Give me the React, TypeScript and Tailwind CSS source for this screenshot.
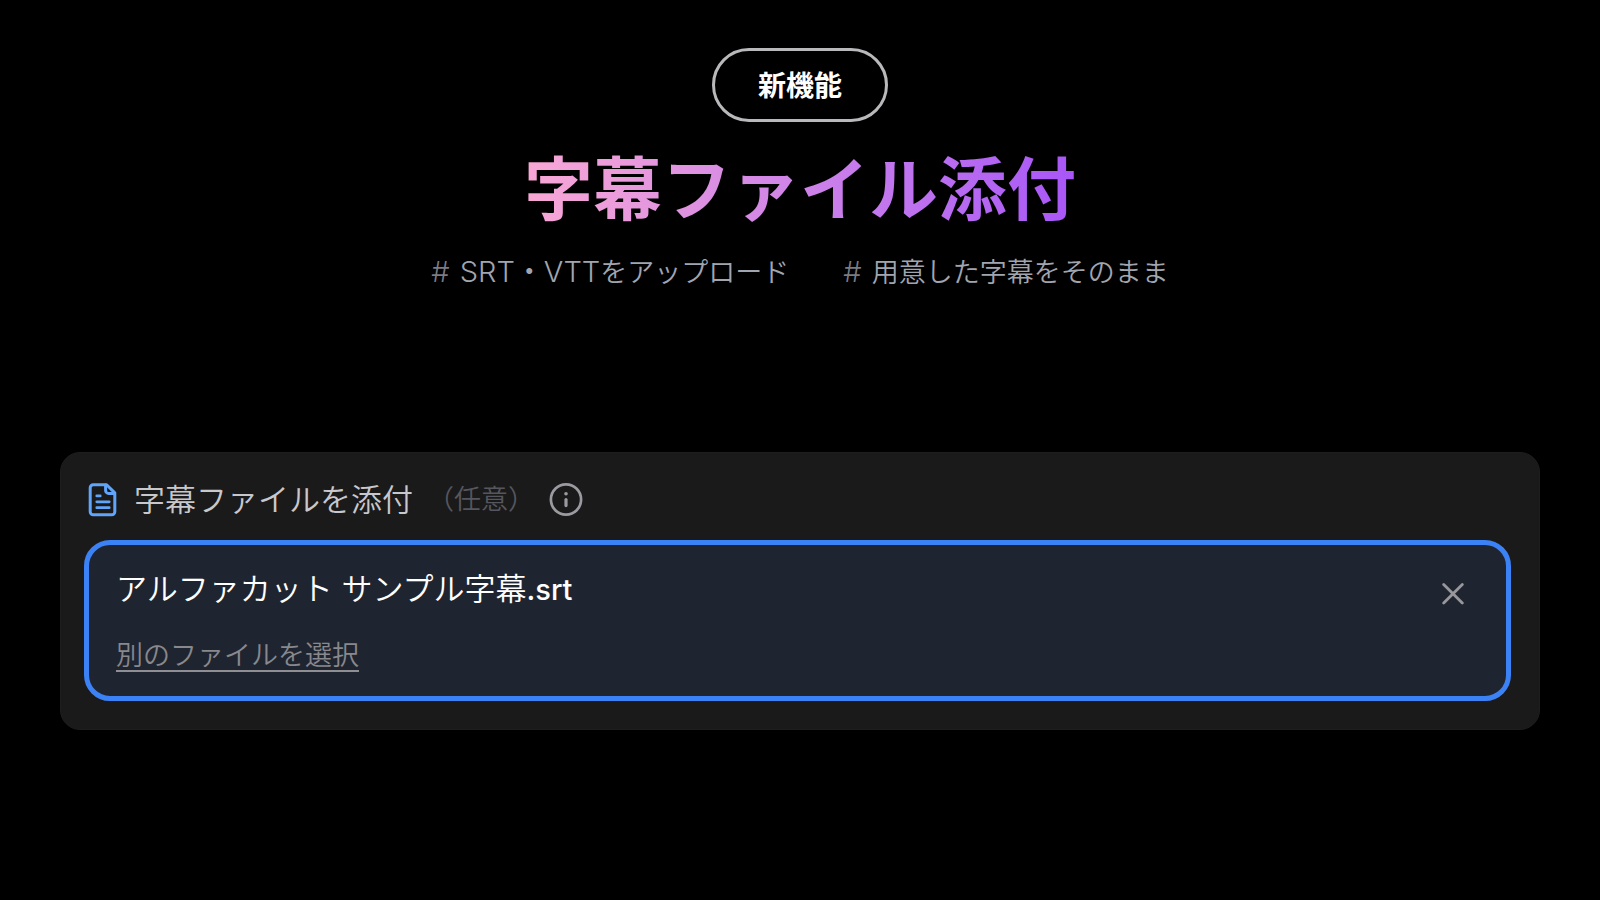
const TAGS = [
  { latin: "SRT・VTT", text: "をアップロード" },
  { latin: "", text: "用意した字幕をそのまま" },
];

function FileIcon() {
  return (
    <svg className="h-[34px] w-[29px] shrink-0" viewBox="0 0 29 34" fill="none" stroke="#60a5fa" strokeWidth="3" strokeLinecap="round" strokeLinejoin="round" aria-hidden="true">
      <path d="M18.6 1.7H5.2A3 3 0 0 0 2.2 4.7v24a3 3 0 0 0 3 3h18.6a3 3 0 0 0 3-3V9.9Z" />
      <path d="M17.6 2v5.4a3 3 0 0 0 3 3h5.6" />
      <path strokeWidth="2.8" d="M8.8 12.9h3.4M8.8 18.8h12.4M8.8 24.7h12.4" />
    </svg>
  );
}

function InfoIcon() {
  return (
    <svg className="size-[34px]" viewBox="0 0 34 34" fill="none" stroke="#9a9aa0" strokeLinecap="round" aria-hidden="true">
      <circle cx="17" cy="16.5" r="15.1" strokeWidth="2.7" />
      <path d="M17 16.6v6" strokeWidth="3.2" />
      <path d="M17 10.8h.01" strokeWidth="3.6" />
    </svg>
  );
}

function CloseIcon() {
  return (
    <svg className="size-[22px]" viewBox="0 0 22 22" fill="none" stroke="#98989c" strokeWidth="2.8" strokeLinecap="round" aria-hidden="true">
      <path d="M1.7 1.5l18.6 18.6M20.3 1.5L1.7 20.1" />
    </svg>
  );
}

export default function App() {
  return (
    <main className="min-h-screen bg-black pt-12 font-['Inter','Noto_Sans_CJK_JP',sans-serif] text-white">
      <header className="flex flex-col items-center">
        <p className="flex h-[74px] items-center rounded-full border-3 border-[#b9b9bc] px-[43px] pt-0.5 text-[28px] leading-10 font-bold">新機能</p>
        <h1 className="mt-4 bg-linear-to-r from-[#f9a8d4] to-[#a855f7] bg-clip-text text-[69px] leading-[104px] font-bold text-transparent">
          字幕ファイル添付
        </h1>
        <ul className="mt-2 flex flex-wrap justify-center gap-x-[54px] text-[27px] leading-[44px] font-[350] text-[#a1a5b0]">
          {TAGS.map((tag) => (
            <li key={tag.text} className="flex items-baseline gap-2.5">
              <span className="text-[29px] text-[#7b7b83]">#</span>
              <span>
                {tag.latin && <span className="text-[29px]">{tag.latin}</span>}
                {tag.text}
              </span>
            </li>
          ))}
        </ul>
      </header>

      <section className="mx-[60px] mt-[157px] rounded-[20px] border border-[#1e1e1e] bg-[#1a1a1a] pt-[25px] pr-7 pb-7 pl-[23px]">
        <div className="flex items-center pl-1">
          <FileIcon />
          <label htmlFor="subtitle-file" className="ml-[17px] text-[31px] leading-[44px] font-[350] text-[#c8c8cc]">
            字幕ファイルを添付
          </label>
          <span className="ml-[14px] text-[27px] leading-[44px] font-[350] text-[#56565f]">（任意）</span>
          <button type="button" aria-label="字幕ファイルの説明" className="ml-[14px]">
            <InfoIcon />
          </button>
        </div>

        <div className="mt-[18px] flex items-start justify-between rounded-[26px] border-5 border-[#3b82f6] bg-[#1f2530] pt-[22px] pr-[42px] pb-6 pl-[27px]">
          <div className="flex flex-col items-start">
            <output id="subtitle-file" className="text-[31px] leading-[44px] font-[350]">
              アルファカット サンプル字幕<span className="text-[29px] font-medium">.srt</span>
            </output>
            <button type="button" className="mt-[30px] border-b-2 border-[#8f8f93] text-[27px] leading-7 font-[350] text-[#88888d]">
              別のファイルを選択
            </button>
          </div>
          <button type="button" aria-label="ファイルを削除" className="mt-4">
            <CloseIcon />
          </button>
        </div>
      </section>
    </main>
  );
}
